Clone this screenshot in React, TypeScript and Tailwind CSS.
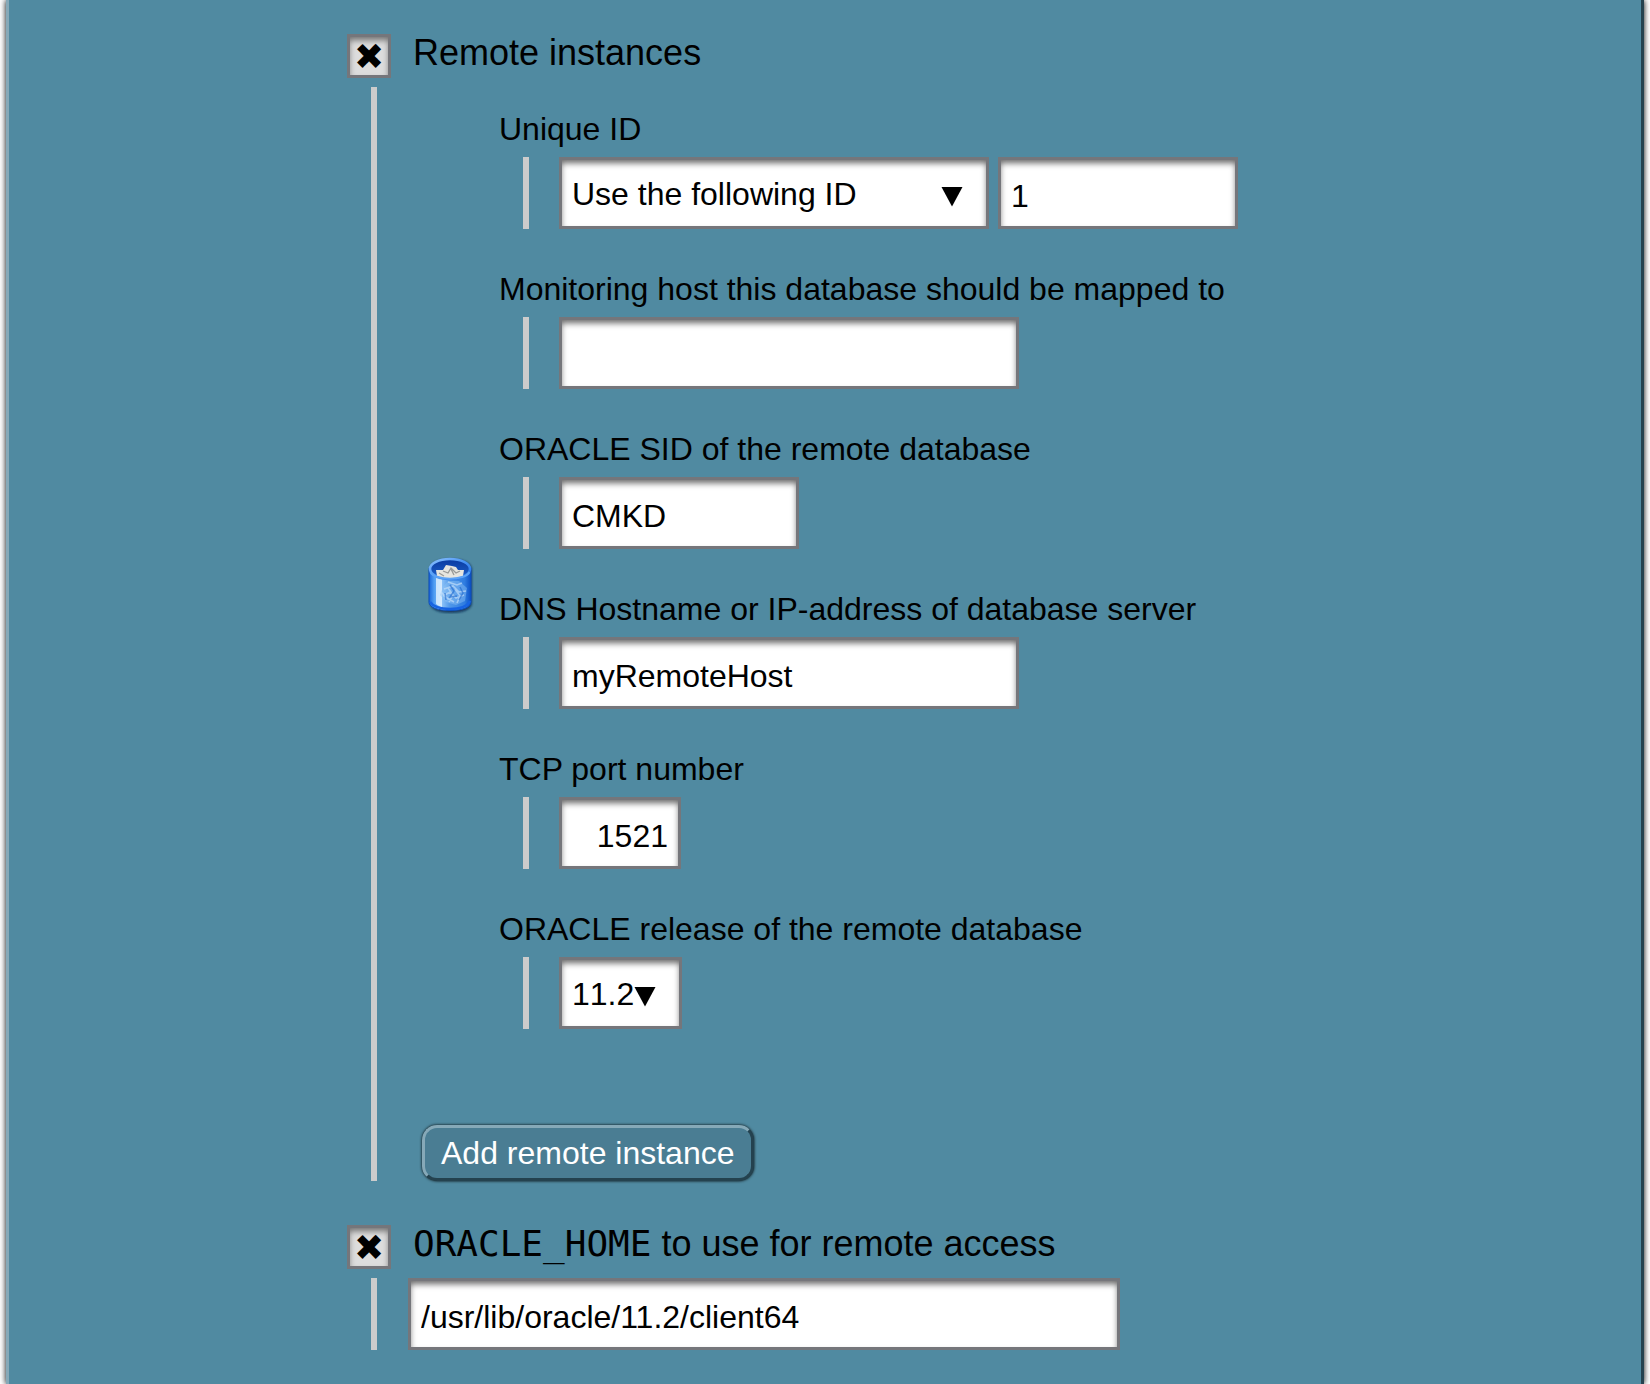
import type { InputHTMLAttributes, ReactNode } from "react";

const boxStyle =
  "h-[72px] rounded-none border-[3px] border-[#75767b] bg-white px-[10px] text-[32px] text-black outline-none shadow-[inset_0_4px_6px_-1px_rgba(0,0,0,0.6)]";

function TextBox({ className, ...rest }: InputHTMLAttributes<HTMLInputElement>) {
  return <input type="text" className={`${boxStyle} pt-[6px] ${className}`} {...rest} />;
}

function SelectBox({ id, label, value, className }: { id?: string; label?: string; value: string; className: string }) {
  return (
    <span className="relative block">
      <select id={id} aria-label={label} defaultValue={value} className={`${boxStyle} block appearance-none pt-[2px] [font-kerning:none] ${className}`}>
        <option>{value}</option>
      </select>
      <svg viewBox="0 0 22 20" className="pointer-events-none absolute top-[30px] right-[26px] h-[20px] w-[22px]" aria-hidden="true">
        <path d="M.5 0H21.5L11 19.500Z" />
      </svg>
    </span>
  );
}

function Field({ id, label, children }: { id: string; label: string; children: ReactNode }) {
  return (
    <div>
      <label htmlFor={id} className="block text-[32px] leading-[40px]">{label}</label>
      <div className="mt-2 ml-6 flex gap-[9px] border-l-[6px] border-[#cccccc] pl-[30px]">{children}</div>
    </div>
  );
}

function Option({ id, title, children }: { id: string; title: ReactNode; children: ReactNode }) {
  return (
    <section>
      <div className="flex items-start gap-[22px]">
        <input
          id={id}
          type="checkbox"
          defaultChecked
          className="flex size-[44px] shrink-0 appearance-none items-center justify-center border-[3px] border-[#75767b] bg-[#dddddd] pt-[2px] font-['DejaVu_Sans'] text-[36px] leading-[36px] text-black shadow-[inset_0_4px_6px_-1px_rgba(0,0,0,0.5)] checked:before:content-['✖']"
        />
        <label htmlFor={id} className="text-[36px] leading-[38px]">{title}</label>
      </div>
      <div className="mt-[9px] ml-6 border-l-[6px] border-[#cccccc]">{children}</div>
    </section>
  );
}

function TrashIcon() {
  return (
    <svg viewBox="0 0 48 58" className="h-[58px] w-[48px]" aria-hidden="true">
      <defs>
        <linearGradient id="side" x1="0" x2="1" y1="0" y2="0">
          <stop offset="0" stopColor="#1763d6" />
          <stop offset=".12" stopColor="#4f9df2" />
          <stop offset=".3" stopColor="#8fc4f8" />
          <stop offset=".5" stopColor="#4f97e9" />
          <stop offset=".85" stopColor="#2e7ce0" />
          <stop offset="1" stopColor="#0b4fc4" />
        </linearGradient>
        <linearGradient id="well" x1="0" x2="0" y1="0" y2="1">
          <stop offset="0" stopColor="#0a3aa0" />
          <stop offset="1" stopColor="#1e62cc" />
        </linearGradient>
        <linearGradient id="rim" x1="0" x2="1" y1="0" y2="1">
          <stop offset="0" stopColor="#8cc2ff" />
          <stop offset=".5" stopColor="#4792f4" />
          <stop offset="1" stopColor="#2272e6" />
        </linearGradient>
        <filter id="soft" x="-20%" y="-20%" width="140%" height="140%">
          <feGaussianBlur stdDeviation="1.2" />
        </filter>
        <filter id="crumple" x="-10%" y="-10%" width="120%" height="120%">
          <feGaussianBlur stdDeviation=".7" />
        </filter>
      </defs>
      <path d="M3 13C3 5 13 2 24 2S45 5 45 13V46C45 53 35 56 24 56S3 53 3 46Z" fill="#082a52" opacity=".8" filter="url(#soft)" transform="translate(1 1)" />
      <path d="M3 12V46C3 52 13 54.500 24 54.500S45 52 45 46V12Z" fill="url(#side)" stroke="#0c4fbd" strokeWidth="1" />
      <path d="M4 46C8 52 16 53 24 53S41 51 44 45" fill="none" stroke="#1763e2" strokeWidth="2.500" />
      <ellipse cx="24" cy="13" rx="20" ry="10" fill="url(#well)" stroke="url(#rim)" strokeWidth="2.600" />
      <path d="M11 20 10 14 17 14 20 9 26 10 30 11 32 14 38 14 37 20C29 23 17 23 11 20Z" fill="#e6e5df" />
      <g filter="url(#crumple)">
        <path d="M17 15 22 17 25 12 30 17 34 15M13 17 18 20M25 13 28 19" fill="none" stroke="#999a98" strokeWidth="1.300" />
      </g>
      <path d="M4.500 16C9 25 39 25 43.500 16" fill="none" stroke="#5ba2f6" strokeWidth="2" />
      <path d="M10 22C13 23 15 23.500 16 24V51C13 50 11 49 10 48Z" fill="#e4f3ff" opacity=".8" />
      <g filter="url(#crumple)">
        <path d="M17 31 22 25 33 25 41 32 39 45 30 49 20 46 14 39Z" fill="#8fc4f5" opacity=".45" />
        <path d="M22 26 31 29 36 27M18 33 27 30 33 36 40 35M17 40 24 36 30 42 38 39M23 46 27 39 22 32M31 47 34 40 29 33M15 36 21 42 28 46" fill="none" stroke="#c4e1fb" strokeWidth="1.600" opacity=".65" />
        <path d="M24 29 28 35 24 41 31 40M34 31 37 37 33 44M19 37 20 44" fill="none" stroke="#1f68cc" strokeWidth="1.500" opacity=".6" />
      </g>
    </svg>
  );
}

export default function App() {
  return (
    <div className="overflow-hidden bg-white font-['Liberation_Sans',Arial,sans-serif] text-black">
      <main className="mx-[6px] min-h-screen border-r-[3px] border-l-[3px] border-l-[#86a9b8] border-r-[#24424f] bg-[#508aa1] pt-[34px] pb-[34px] pl-[338px] shadow-[0_0_6px_#000000]">
        <Option id="remote" title="Remote instances">
          <div className="pt-[22px] pl-[45px]">
            <div className="flex items-center gap-[25px]">
              <button type="button" aria-label="Delete this entry" className="ml-1 shrink-0">
                <TrashIcon />
              </button>
              <div className="flex flex-col gap-10 pb-8">
                <Field id="uid" label="Unique ID">
                  <SelectBox id="uid" value="Use the following ID" className="w-[430px]" />
                  <TextBox aria-label="ID" defaultValue="1" className="w-[240px]" />
                </Field>
                <Field id="host" label="Monitoring host this database should be mapped to">
                  <TextBox id="host" className="w-[460px]" />
                </Field>
                <Field id="sid" label="ORACLE SID of the remote database">
                  <TextBox id="sid" defaultValue="CMKD" className="w-[240px]" />
                </Field>
                <Field id="dns" label="DNS Hostname or IP-address of database server">
                  <TextBox id="dns" defaultValue="myRemoteHost" className="w-[460px]" />
                </Field>
                <Field id="port" label="TCP port number">
                  <TextBox id="port" defaultValue="1521" className="w-[122px] text-right" />
                </Field>
                <Field id="release" label="ORACLE release of the remote database">
                  <SelectBox id="release" value="11.2" className="w-[123px]" />
                </Field>
              </div>
            </div>
            <button
              type="button"
              className="mt-16 block h-[56px] rounded-[15px] border-[3px] border-t-[#86a9b8] border-r-[#24424f] border-b-[#24424f] border-l-[#86a9b8] bg-[#4a7d93] px-4 text-[32px] leading-[48px] text-white shadow-[0_0_3px_#000000]"
            >
              Add remote instance
            </button>
          </div>
        </Option>
        <div className="mt-11">
          <Option
            id="home"
            title={<><code className="font-['DejaVu_Sans_Mono',monospace]">ORACLE_HOME</code> to use for remote access</>}
          >
            <TextBox aria-label="ORACLE_HOME path" defaultValue="/usr/lib/oracle/11.2/client64" className="ml-[31px] block w-[712px]" />
          </Option>
        </div>
      </main>
    </div>
  );
}
